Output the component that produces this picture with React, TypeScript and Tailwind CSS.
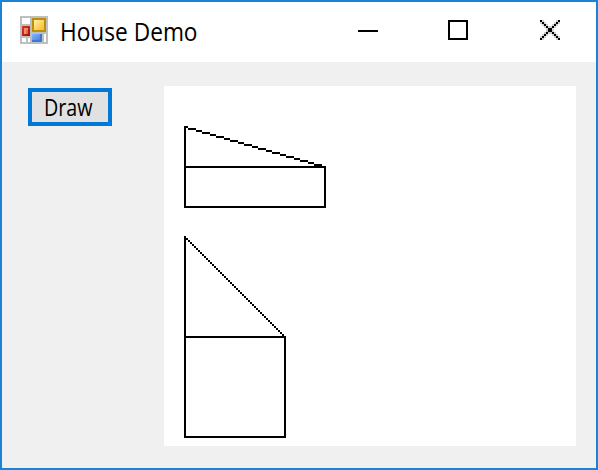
type Point = [number, number];

// Pixels of a line on the form's coarse drawing grid.
function linePixels([x0, y0]: Point, [x1, y1]: Point): Point[] {
  const steps = x1 - x0;
  return Array.from({ length: steps + 1 }, (_, i): Point => [
    x0 + i,
    Math.round(y0 + (i * (y1 - y0)) / steps),
  ]);
}

function House({ x, y, width, height }: { x: number; y: number; width: number; height: number }) {
  const base = y + height;
  return (
    <g>
      <path
        d={`M${x + 0.5} ${y}V${base + height + 0.5}H${x + width + 0.5}V${base + 0.5}H${x + 0.5}`}
        fill="none"
        stroke="black"
      />
      {linePixels([x, y], [x + width, base]).map(([px, py]) => (
        <rect key={px} x={px} y={py} width="1" height="1" fill="black" />
      ))}
    </g>
  );
}

function FormIcon() {
  return (
    <svg className="h-7 w-7 shrink-0" viewBox="0 0 14 14" shapeRendering="crispEdges" aria-hidden="true">
      <defs>
        <linearGradient id="gold" x1="0" y1="0" x2="1" y2="1">
          <stop offset="0" stopColor="#fff0b0" />
          <stop offset="1" stopColor="#f6bd20" />
        </linearGradient>
        <linearGradient id="blue" x1="0" y1="0" x2="1" y2="1">
          <stop offset="0" stopColor="#8ab6fa" />
          <stop offset="1" stopColor="#4a80e4" />
        </linearGradient>
        <linearGradient id="red" x1="0" y1="0" x2="1" y2="1">
          <stop offset="0" stopColor="#d83a20" />
          <stop offset="1" stopColor="#a01008" />
        </linearGradient>
      </defs>
      <path fill="#bfbfbf" d="M0 0h14v14H0z" />
      <path fill="#fff" d="M1 1h4v3H1zM1 11h2v2H1zM4 11h1v2H4zM12 9h1v4h-1z" />
      <path fill="#bd8e08" d="M6 1h7v7H6z" />
      <path fill="url(#gold)" d="M7 2h5v5H7z" />
      <path fill="url(#red)" d="M1 5h4v5H1z" />
      <path fill="#f08c78" d="M2 6h2v3H2z" />
      <path fill="#e66450" d="M3 7h1v2H3z" />
      <path fill="#3c78d8" d="M6 9h5v4H6z" />
      <path fill="url(#blue)" d="M6 9h4v3H6z" />
    </svg>
  );
}

function CloseIcon() {
  return (
    <svg className="h-5 w-5" viewBox="0 0 10 10" shapeRendering="crispEdges">
      {Array.from({ length: 9 }, (_, i) => (
        <g key={i} fill="#d0d0d0">
          <rect x={i + 1} y={i} width="1" height="1" />
          <rect x={i} y={i + 1} width="1" height="1" />
          <rect x={8 - i} y={i} width="1" height="1" />
          <rect x={9 - i} y={i + 1} width="1" height="1" />
        </g>
      ))}
      {Array.from({ length: 10 }, (_, i) => (
        <g key={i} fill="black">
          <rect x={i} y={i} width="1" height="1" />
          <rect x={9 - i} y={i} width="1" height="1" />
        </g>
      ))}
    </svg>
  );
}

function TitleBar() {
  return (
    <header className="flex h-[60px] items-center bg-white pr-[36px] pb-1 pl-[18px]">
      <FormIcon />
      <h1 className="ml-[12px] origin-left scale-x-[0.907] pt-px text-[25px] leading-[32px] font-normal whitespace-nowrap text-black [font-family:'Open_Sans','Noto_Sans',sans-serif]">
        House Demo
      </h1>
      <div className="ml-auto flex items-center">
        <button aria-label="Minimize" className="mr-[70px] block">
          <svg className="h-5 w-5" viewBox="0 0 10 10" shapeRendering="crispEdges">
            <path d="M0 5h10v1H0z" />
          </svg>
        </button>
        <button aria-label="Maximize" className="mr-[72px] block">
          <svg className="h-5 w-5" viewBox="0 0 10 10" shapeRendering="crispEdges">
            <path d="M.5 .5h9v9h-9z" fill="none" stroke="black" />
          </svg>
        </button>
        <button aria-label="Close" className="block">
          <CloseIcon />
        </button>
      </div>
    </header>
  );
}

export default function App() {
  return (
    <main className="flex h-[470px] w-[598px] flex-col border-2 border-[#1883d7] bg-[#f0f0f0]">
      <TitleBar />
      <div className="flex flex-1 items-start pt-6 pl-[26px]">
        <button className="mt-[2px] flex h-[38px] w-[84px] items-center border-4 border-[#0078d7] bg-[#e1e1e1] pl-[12px]">
          <span className="origin-left scale-x-[0.82] text-[24px] leading-[30px] text-black [font-family:'Open_Sans','Noto_Sans',sans-serif]">
            Draw
          </span>
        </button>
        <svg className="ml-[52px] h-[360px] w-[412px] bg-white" viewBox="0 0 206 180" shapeRendering="crispEdges">
          <House x={10} y={20} width={70} height={20} />
          <House x={10} y={75} width={50} height={50} />
        </svg>
      </div>
    </main>
  );
}
